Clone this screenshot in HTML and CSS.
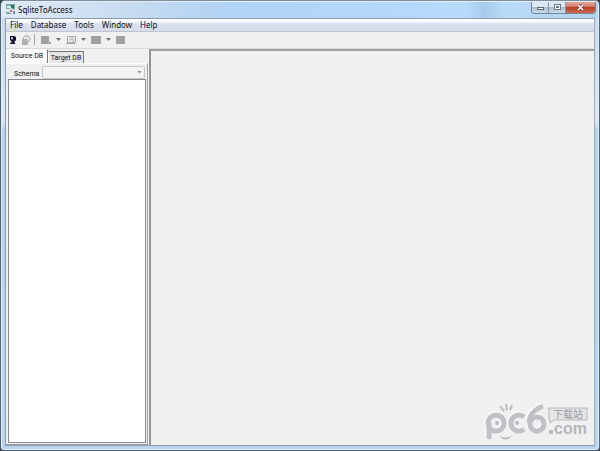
FILE: index.html
```html
<!DOCTYPE html>
<html lang="en">

<head>
    <meta charset="UTF-8">
    <meta name="viewport" content="width=device-width, initial-scale=1.0">
    <title>SqliteToAccess</title>
    <link rel="stylesheet" href="styles.css">
</head>

<body>
    <div class="window">
        <header class="titlebar">
            <svg class="app-icon" viewBox="0 0 11 11">
                <rect x="1" y="0" width="9" height="10" fill="#7aa9a3"/>
                <path d="M2 2h4v2H2zM1 5h3v3H1z" fill="#d9eee9"/>
                <path d="M6 1h3v3H6z" fill="#2f776b"/>
                <path d="M4 5l2-1 2 2 2-1v5H7L4 8z" fill="#e3e7ef"/>
                <path d="M5 6h2v2H5z" fill="#d1686c"/>
                <path d="M8 7h2v3H8z" fill="#7184b5"/>
            </svg>
            <span class="title">SqliteToAccess</span>
            <div class="win-buttons">
                <button class="win-btn" aria-label="Minimize">
                    <svg width="9" height="9" viewBox="0 0 9 9"><rect x="1.5" y="4.5" width="6" height="2" fill="#fff" stroke="#59667a"/></svg>
                </button>
                <button class="win-btn" aria-label="Maximize">
                    <svg width="9" height="9" viewBox="0 0 9 9"><rect x="1.5" y="1.5" width="6" height="5" fill="#fff" stroke="#69778b"/><rect x="3.5" y="3.5" width="2" height="1" fill="#8fa5bf" stroke="#69778b"/></svg>
                </button>
                <button class="win-btn close" aria-label="Close">
                    <svg width="9" height="9" viewBox="0 0 9 9"><path d="M2 2l5 5M7 2L2 7" stroke="#71404a" stroke-width="3"/><path d="M2 2l5 5M7 2L2 7" stroke="#fff" stroke-width="1.6"/></svg>
                </button>
            </div>
        </header>

        <div class="client">
            <nav class="menu">
                <button>File</button>
                <button>Database</button>
                <button>Tools</button>
                <button>Window</button>
                <button>Help</button>
            </nav>

            <div class="toolbar">
                <button class="tool" aria-label="Connect">
                    <svg width="9" height="10" viewBox="0 0 9 10">
                        <path d="M2 1h4l2 1v3L6 7l1 1v1H2V8l2-1-2-2z" fill="#101020"/>
                        <path d="M3 2h2v2l-1 1-1-1z" fill="#a4b2df"/>
                        <path d="M6 5h2L6 7zM3 8h2v1H3z" fill="#223580"/>
                    </svg>
                </button>
                <button class="tool" aria-label="Disconnect" disabled>
                    <svg width="10" height="10" viewBox="0 0 10 10">
                        <path d="M1 4h6v6H1z" fill="#b0b0b0"/>
                        <path d="M2.500 4V2.500L4 1h3l2 2v2L7 7" fill="none" stroke="#a5a5a5"/>
                        <path d="M5 3l2 1-2 2" fill="none" stroke="#ccc"/>
                    </svg>
                </button>
                <span class="separator"></span>
                <button class="tool" aria-label="Export" disabled>
                    <svg width="10" height="10" viewBox="0 0 10 10"><path d="M0 1h8v5l2 1v2H0z" fill="#a0a0a0"/><path d="M7 7h2" stroke="#c8c8c8"/></svg>
                </button>
                <button class="arrow" aria-label="Export options" disabled></button>
                <button class="tool" aria-label="View" disabled>
                    <svg width="10" height="10" viewBox="0 0 10 10"><path d="M1.500 1.500h8v6h-8zM0 8.500h9" fill="none" stroke="#a6a6a6"/><path d="M3 5h2V3h2v3h1" fill="none" stroke="#b0b0b0"/></svg>
                </button>
                <button class="arrow" aria-label="View options" disabled></button>
                <button class="tool" aria-label="Query" disabled>
                    <svg width="10" height="10" viewBox="0 0 10 10"><path d="M0 1h10v8H0z" fill="#a0a0a0"/></svg>
                </button>
                <button class="arrow" aria-label="Query options" disabled></button>
                <button class="tool" aria-label="Stop" disabled>
                    <svg width="10" height="10" viewBox="0 0 10 10"><path d="M0 1h9v8H0z" fill="#a0a0a0"/></svg>
                </button>
            </div>

            <div class="content">
                <aside class="sidebar">
                    <div class="tabs" role="tablist">
                        <button class="tab active" role="tab" aria-selected="true">Source DB</button>
                        <button class="tab" role="tab" aria-selected="false">Target DB</button>
                    </div>
                    <div class="panel">
                        <div class="schema">
                            <label for="schema">Schema</label>
                            <div class="select-box">
                                <select id="schema" disabled></select>
                            </div>
                        </div>
                        <div class="tree"></div>
                    </div>
                </aside>
                <main class="workspace">
                    <svg class="watermark" viewBox="0 0 106 40" role="img" aria-label="pc6.com">
                        <g fill="none" stroke="#fff" stroke-width="5" transform="translate(-1 -1)">
                            <path d="M5 38V22"/>
                            <circle cx="12" cy="22" r="8"/>
                            <path d="M40 16a8 8 0 1 0 0 12"/>
                            <path d="M59 5c-8 3-14 9-14 17"/>
                            <circle cx="53" cy="23" r="7"/>
                        </g>
                        <g fill="none" stroke="#c0c1c6" stroke-width="5">
                            <path d="M5 38V22"/>
                            <circle cx="12" cy="22" r="8"/>
                            <path d="M40 16a8 8 0 1 0 0 12"/>
                            <path d="M59 5c-8 3-14 9-14 17"/>
                            <circle cx="53" cy="23" r="7"/>
                        </g>
                        <circle cx="13" cy="22" r="2" fill="#b9babf"/>
                        <circle cx="33" cy="22" r="2" fill="#b9babf"/>
                        <path d="M16 5l4 5M22 3l1 6M28 4l-2 5" stroke="#b9babe" stroke-width="2"/>
                        <path d="M15 35q7 7 13 0q-6 3-13 0z" fill="#b9babf"/>
                        <path d="M65 7h38v12H70l-4 3v-3h-1z" fill="#e4e5e7" stroke="#b7b8bc"/>
                        <text class="mark-cn" x="69" y="17">下载站</text>
                        <rect x="65" y="29" width="4" height="4" fill="#b9babf"/>
                        <text class="mark-com" x="70" y="33">com</text>
                    </svg>
                </main>
            </div>
        </div>
    </div>
</body>

</html>
```

FILE: styles.css
```css
* {
    box-sizing: border-box;
}

body {
    margin: 0;
    background-color: #343f49;
    font-family: "Noto Sans", "Open Sans", sans-serif;
    font-size: 8px;
    color: #111;
}

button {
    margin: 0;
    padding: 0;
    border: none;
    background: none;
    font: inherit;
    color: inherit;
}

svg {
    display: block;
}

.window {
    display: flex;
    flex-direction: column;
    min-height: 100vh;
    padding: 0 4px 4px;
    background: linear-gradient(to bottom, #c5d8ed, #dce8f4 120px, #b5d2ef 130px, #b9d5f0);
    border: 1px solid #4d6274;
    border-top-color: #7e8b99;
    border-radius: 5px 5px 4px 4px;
    box-shadow: inset 0 0 0 1px #e4f1fc;
}

.titlebar {
    display: flex;
    align-items: center;
    height: 17px;
    margin: 0 -3px;
    padding: 0 2px 1px 3px;
    background: linear-gradient(to right, #dfe9f5, #c6dbf0 22%, #b1d3f5 38%, #b8dbfc 78%, #a6cae9 81%, #b9dbfa 84%, #b4d3ef);
    border-top: 1px solid #e4f1fc;
    border-radius: 4px 4px 0 0;
}

.app-icon {
    width: 11px;
    height: 11px;
    margin-right: 2px;
}

.title {
    flex: 1;
}

.win-buttons {
    display: flex;
    align-self: flex-start;
    height: 12px;
    border: 1px solid #73859a;
    border-top: none;
    border-radius: 0 0 4px 4px;
    overflow: hidden;
}

.win-btn {
    display: flex;
    align-items: center;
    justify-content: center;
    width: 17px;
    background: linear-gradient(to bottom, #dce8f4 45%, #aebfd1 50%, #c8d9e9);
    border-right: 1px solid #8495a9;
}

.win-btn.close {
    width: 29px;
    background: linear-gradient(to bottom, #e2a798, #d47a66 45%, #b93e25 50%, #cf6a4e);
    border-right: none;
}

.client {
    display: flex;
    flex: 1;
    flex-direction: column;
    background-color: #f0f0f0;
    border: 1px solid #8c9bac;
    border-right-color: #9dadbc;
}

.menu {
    display: flex;
    gap: 8px;
    height: 13px;
    padding: 0 4px;
    line-height: 12px;
    background: linear-gradient(to bottom, #fff, #f2f6fb 25%, #dce1f0 40%, #d7dcec);
    border-bottom: 1px solid #c1c4cd;
}

.toolbar {
    display: flex;
    align-items: center;
    height: 17px;
    padding-bottom: 1px;
    border-bottom: 1px solid #d8d8d8;
}

.tool {
    padding: 0 2px;
}

.separator {
    width: 1px;
    height: 11px;
    margin: 0 4px 0 1px;
    background-color: #a5a5a5;
}

.arrow {
    width: 5px;
    height: 3px;
    margin: 0 3px;
    background-color: #707070;
    clip-path: polygon(0 0, 100% 0, 50% 100%);
}

.content {
    display: flex;
    flex: 1;
}

.sidebar {
    display: flex;
    flex-direction: column;
    width: 143px;
    font-family: Roboto, "Liberation Sans", sans-serif;
    font-size: 7px;
    border-right: 1px solid #f8f8f8;
}

.tabs {
    display: flex;
    align-items: flex-end;
    height: 14px;
}

.tab {
    width: 36px;
    height: 12px;
    background-color: #e6e6e6;
    border: 1px solid #777;
    border-left-color: #fff;
    border-bottom: none;
}

.tab.active {
    width: 42px;
    height: 14px;
    padding-bottom: 2px;
    background-color: #fafafa;
    border-color: #fff #777 #fff #fff;
}

.panel {
    display: flex;
    flex: 1;
    flex-direction: column;
    padding: 1px 1px 1px 2px;
    border: 1px solid #fff;
    border-left: none;
    border-right-color: #a0a0a0;
    border-bottom-color: #a0a0a0;
}

.schema {
    display: flex;
    align-items: center;
    gap: 3px;
    height: 14px;
    padding-left: 6px;
}

.schema label {
    padding-top: 4px;
}

.select-box {
    position: relative;
    flex: 1;
    height: 13px;
    margin-right: 1px;
}

.select-box::after {
    content: "";
    position: absolute;
    top: 5px;
    right: 3px;
    width: 5px;
    height: 3px;
    background-color: #9a9a9a;
    clip-path: polygon(0 0, 100% 0, 50% 100%);
}

.select-box select {
    display: block;
    width: 100%;
    height: 100%;
    padding: 0;
    background-color: #f3f3f3;
    border: 1px solid #c6c6c6;
    border-radius: 2px;
    appearance: none;
    opacity: 1;
}

.tree {
    flex: 1;
    background-color: #fff;
    border: 1px solid #868a94;
}

.workspace {
    display: flex;
    flex: 1;
    align-items: flex-end;
    justify-content: flex-end;
    padding: 0 4px 4px 0;
    border-top: 2px solid #a0a0a0;
    border-left: 2px solid #959595;
}

.watermark {
    width: 106px;
    height: 40px;
}

.mark-cn {
    font-family: "Noto Sans CJK SC", sans-serif;
    font-size: 10px;
    fill: #97989d;
}

.mark-com {
    font-family: "Liberation Sans", sans-serif;
    font-size: 16px;
    font-weight: bold;
    fill: #b5b6bb;
}
```
